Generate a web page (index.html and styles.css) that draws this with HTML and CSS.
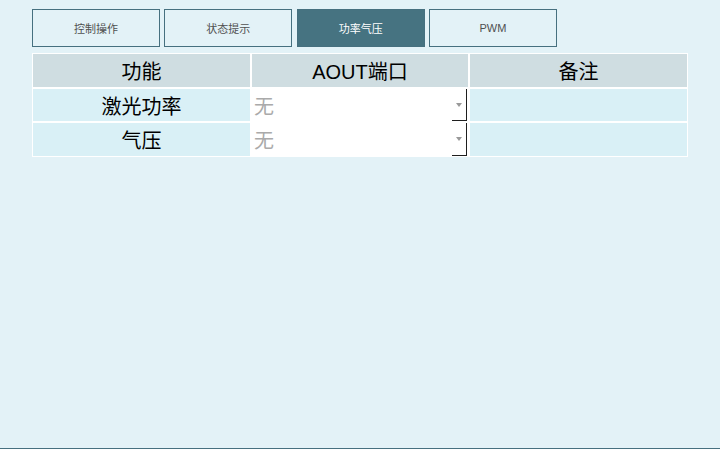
FILE: index.html
```html
<!DOCTYPE html>
<html>
<head>
<meta charset="utf-8">
<link rel="stylesheet" href="styles.css">
</head>
<body>
<div class="page">
  <div class="tabs">
    <div class="tab">控制操作</div>
    <div class="tab">状态提示</div>
    <div class="tab active">功率气压</div>
    <div class="tab">PWM</div>
  </div>
  <div class="grid">
    <div class="cell head">功能</div>
    <div class="cell head">AOUT端口</div>
    <div class="cell head">备注</div>

    <div class="cell row r1">激光功率</div>
    <div class="cell sel r1"><div class="select"><span class="val">无</span><span class="btn"><span class="tri"></span></span></div></div>
    <div class="cell row r1"></div>

    <div class="cell row r2">气压</div>
    <div class="cell sel r2"><div class="select"><span class="val">无</span><span class="btn"><span class="tri"></span></span></div></div>
    <div class="cell row r2"></div>
  </div>
</div>
</body>
</html>
```
FILE: styles.css
```css
html, body {
  margin: 0;
  padding: 0;
}
body {
  width: 720px;
  height: 449px;
  background: #e3f2f7;
  font-family: "Liberation Sans", "Noto Sans CJK SC", sans-serif;
  overflow: hidden;
}
.page {
  box-sizing: border-box;
  height: 449px;
  padding: 9px 32px 0 32px;
  border-bottom: 1px solid #46707f;
}
.tabs {
  display: flex;
  gap: 4.33px;
}
.tab {
  box-sizing: border-box;
  width: 128px;
  height: 38px;
  border: 1px solid #46707f;
  display: flex;
  align-items: center;
  justify-content: center;
  font-size: 11px;
  color: #505050;
  background: #e3f2f7;
}
.tab.active {
  background: #467381;
  color: #ffffff;
}
.grid {
  margin-top: 6px;
  width: 656px;
  box-sizing: border-box;
  background: #ffffff;
  padding: 1px;
  display: grid;
  grid-template-columns: 217px 216px 217px;
  grid-template-rows: 33px 32px 33px;
  gap: 2px;
}
.cell {
  display: flex;
  align-items: center;
  justify-content: center;
  font-size: 20px;
  color: #000;
}
.head {
  background: #cfdde1;
}
.row {
  background: #d9f0f6;
}
.sel {
  background: #ffffff;
  justify-content: flex-start;
  align-items: stretch;
}
.select {
  flex: 1;
  display: flex;
  align-items: stretch;
  margin-right: 1px;
}
.val {
  flex: 1;
  display: flex;
  align-items: center;
  padding-left: 2px;
  color: #aaaaaa;
  font-size: 20px;
}
.btn {
  width: 15px;
  border-right: 1px solid #1e1e1e;
  border-bottom: 1px solid #1e1e1e;
  display: flex;
  align-items: flex-start;
  justify-content: center;
  padding-top: 14px;
  box-sizing: border-box;
}
.tri {
  width: 0;
  height: 0;
  border-left: 3.5px solid transparent;
  border-right: 3.5px solid transparent;
  border-top: 4px solid #999999;
}
```
